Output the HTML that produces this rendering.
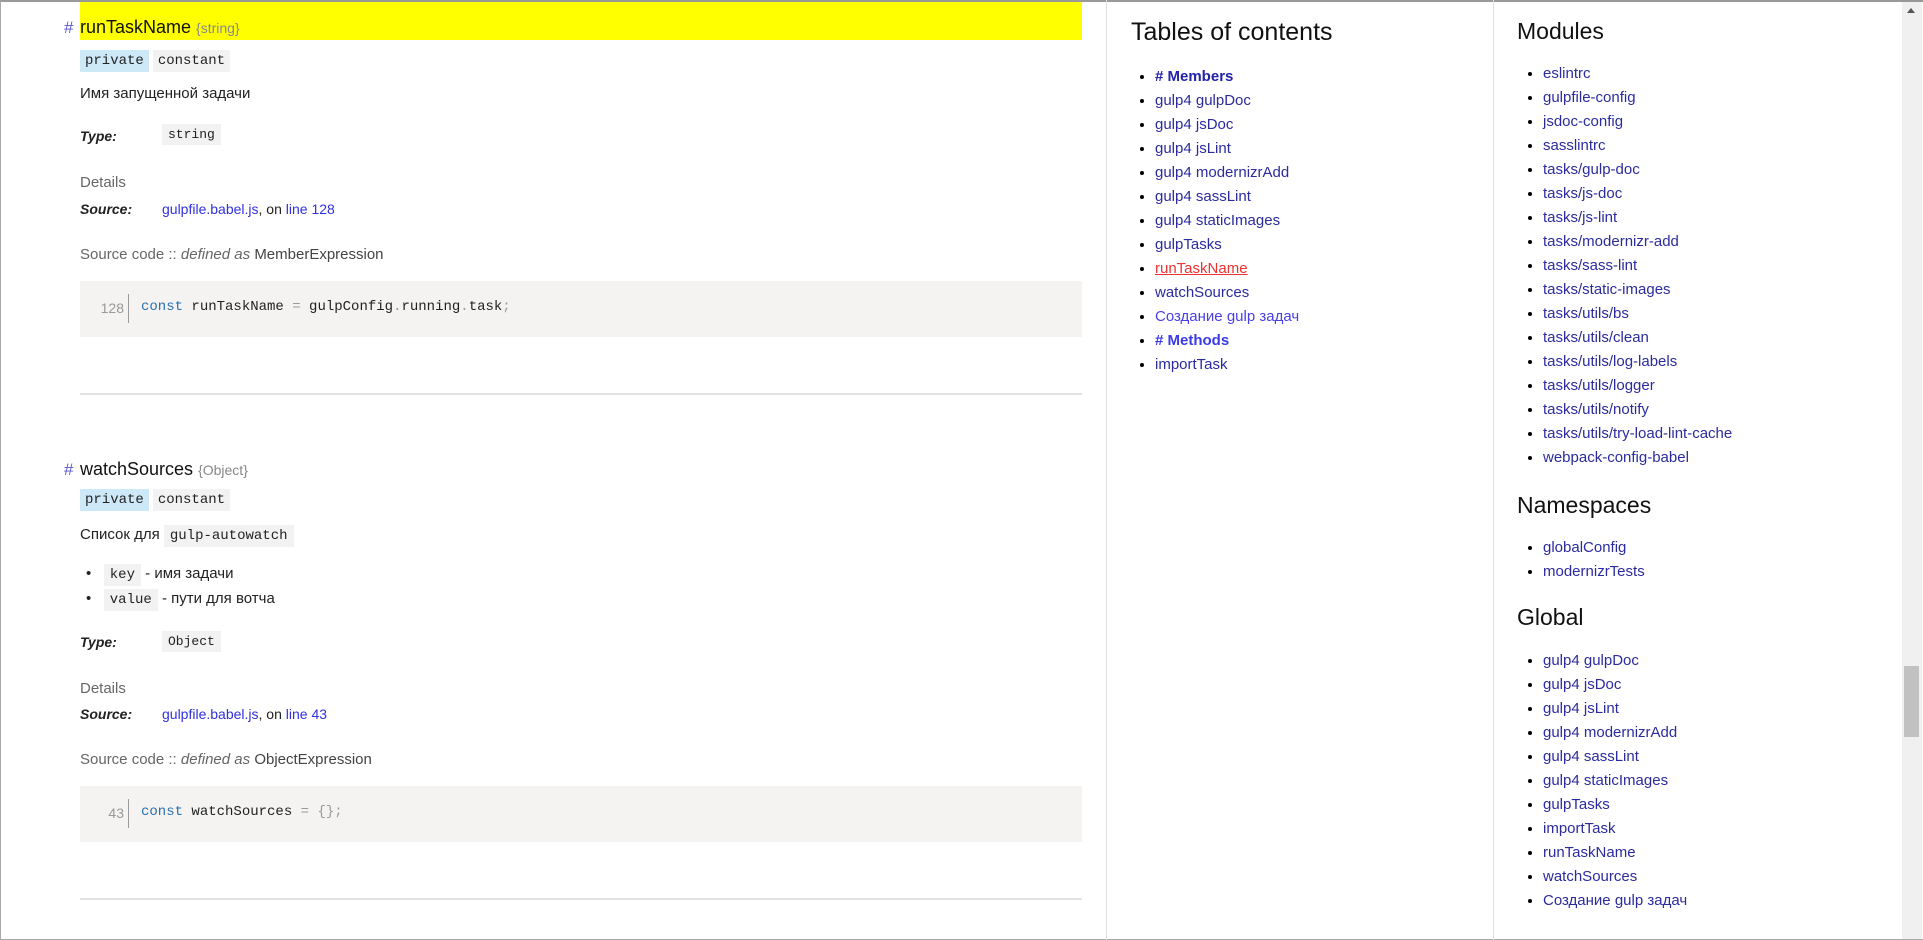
<!DOCTYPE html>
<html><head><meta charset="utf-8"><style>
*{margin:0;padding:0;box-sizing:border-box}
body{width:1923px;height:940px;overflow:hidden;background:#fff;font-family:"Liberation Sans","Noto Sans CJK SC",sans-serif;color:#222;position:relative}
.a{position:absolute;white-space:nowrap}
.frame{position:absolute;left:0;top:0;width:1923px;height:940px;border-top:2px solid #999;border-left:1px solid #aaa;border-bottom:1px solid #aaa}
.tag{display:inline-block;font-family:"Liberation Mono",monospace;font-size:14px;padding:3px 5px;background:#f2f2f2;margin-right:4px}
.tag.p{background:#cde8f7}
.c{font-family:"Liberation Mono",monospace;font-size:14px;background:#f2f2f2;padding:3px 6px}
.lbl{font-weight:bold;font-style:italic;font-size:14px}
.gray{color:#666}
a{color:#3030e0;text-decoration:none}
.code{position:absolute;left:80px;width:1002px;height:56px;background:#f4f3f2}
.code .n{position:absolute;left:12px;top:19px;width:32px;text-align:right;color:#999;font-size:14px}
.code .bar{position:absolute;left:48px;top:13px;width:1px;height:29px;background:#999}
.code .t{position:absolute;left:61px;top:18px;font-family:"Liberation Mono",monospace;font-size:14px;color:#222}
.hr{position:absolute;left:80px;width:1002px;height:2px;background:#e2e2e2}
ul{list-style:disc;position:absolute}
li{font-size:15px;height:24px;line-height:24px;color:#000}
li a{color:#2b2ba0}
h2{position:absolute;font-weight:normal;font-size:25px;color:#111}
</style></head><body>
<div class="frame"></div>
<div class="a" style="left:80px;top:2px;width:1002px;height:38px;background:#ffff00"></div>
<div class="a" style="left:64px;top:18px;font-size:17px;color:#5a5acc">#</div>
<div class="a" style="left:80px;top:17px;font-size:18px;color:#111">runTaskName <span style="font-size:14px;color:#888">{string}</span></div>
<div class="a" style="left:80px;top:50px"><span class="tag p">private</span><span class="tag">constant</span></div>
<div class="a" style="left:80px;top:85px;font-size:15px">Имя запущенной задачи</div>
<div class="a lbl" style="left:80px;top:128px">Type:</div>
<div class="a" style="left:162px;top:125px"><span class="c" style="font-size:13px">string</span></div>
<div class="a gray" style="left:80px;top:174px;font-size:15px">Details</div>
<div class="a lbl" style="left:80px;top:201px">Source:</div>
<div class="a" style="left:162px;top:201px;font-size:14px"><a>gulpfile.babel.js</a>, on <a>line 128</a></div>
<div class="a gray" style="left:80px;top:246px;font-size:15px">Source code :: <i>defined as</i> <span style="color:#444">MemberExpression</span></div>
<div class="code" style="top:281px"><span class="n">128</span><span class="bar"></span><span class="t"><span style="color:#2a6fb0">const</span> runTaskName <span style="color:#999">=</span> gulpConfig<span style="color:#999">.</span>running<span style="color:#999">.</span>task<span style="color:#999">;</span></span></div>
<div class="hr" style="top:393px"></div>

<div class="a" style="left:64px;top:460px;font-size:17px;color:#5a5acc">#</div>
<div class="a" style="left:80px;top:459px;font-size:18px;color:#111">watchSources <span style="font-size:14px;color:#888">{Object}</span></div>
<div class="a" style="left:80px;top:489px"><span class="tag p">private</span><span class="tag">constant</span></div>
<div class="a" style="left:80px;top:526px;font-size:15px">Список для <span class="c">gulp-autowatch</span></div>
<div class="a" style="left:86px;top:565px;font-size:15px">•&nbsp;&nbsp;&nbsp;<span class="c">key</span> - имя задачи</div>
<div class="a" style="left:86px;top:590px;font-size:15px">•&nbsp;&nbsp;&nbsp;<span class="c">value</span> - пути для вотча</div>
<div class="a lbl" style="left:80px;top:634px">Type:</div>
<div class="a" style="left:162px;top:632px"><span class="c" style="font-size:13px">Object</span></div>
<div class="a gray" style="left:80px;top:680px;font-size:15px">Details</div>
<div class="a lbl" style="left:80px;top:706px">Source:</div>
<div class="a" style="left:162px;top:706px;font-size:14px"><a>gulpfile.babel.js</a>, on <a>line 43</a></div>
<div class="a gray" style="left:80px;top:751px;font-size:15px">Source code :: <i>defined as</i> <span style="color:#444">ObjectExpression</span></div>
<div class="code" style="top:786px"><span class="n">43</span><span class="bar"></span><span class="t"><span style="color:#2a6fb0">const</span> watchSources <span style="color:#999">=</span> <span style="color:#999">{};</span></span></div>
<div class="hr" style="top:898px"></div>

<div class="a" style="left:1106px;top:0;width:1px;height:940px;background:#e0e0e0"></div>
<div class="a" style="left:1493px;top:0;width:1px;height:940px;background:#e0e0e0"></div>

<h2 style="left:1131px;top:18px">Tables of contents</h2>
<ul style="left:1155px;top:65px">
<li><a style="font-weight:bold;color:#2222aa">#&nbsp;Members</a></li>
<li><a>gulp4 gulpDoc</a></li><li><a>gulp4 jsDoc</a></li><li><a>gulp4 jsLint</a></li><li><a>gulp4 modernizrAdd</a></li><li><a>gulp4 sassLint</a></li><li><a>gulp4 staticImages</a></li><li><a>gulpTasks</a></li>
<li><a style="color:#ee3333;text-decoration:underline">runTaskName</a></li>
<li><a>watchSources</a></li><li><a style="color:#4a3ee6">Создание gulp задач</a></li>
<li><a style="font-weight:bold;color:#3a3ae8">#&nbsp;Methods</a></li>
<li><a>importTask</a></li>
</ul>

<h2 style="left:1517px;top:18px;font-size:23px">Modules</h2>
<ul style="left:1543px;top:62px">
<li><a>eslintrc</a></li><li><a>gulpfile-config</a></li><li><a>jsdoc-config</a></li><li><a>sasslintrc</a></li><li><a>tasks/gulp-doc</a></li><li><a>tasks/js-doc</a></li><li><a>tasks/js-lint</a></li><li><a>tasks/modernizr-add</a></li><li><a>tasks/sass-lint</a></li><li><a>tasks/static-images</a></li><li><a>tasks/utils/bs</a></li><li><a>tasks/utils/clean</a></li><li><a>tasks/utils/log-labels</a></li><li><a>tasks/utils/logger</a></li><li><a>tasks/utils/notify</a></li><li><a>tasks/utils/try-load-lint-cache</a></li><li><a>webpack-config-babel</a></li>
</ul>
<h2 style="left:1517px;top:492px;font-size:23px">Namespaces</h2>
<ul style="left:1543px;top:536px"><li><a>globalConfig</a></li><li><a>modernizrTests</a></li></ul>
<h2 style="left:1517px;top:604px;font-size:23px">Global</h2>
<ul style="left:1543px;top:649px">
<li><a>gulp4 gulpDoc</a></li><li><a>gulp4 jsDoc</a></li><li><a>gulp4 jsLint</a></li><li><a>gulp4 modernizrAdd</a></li><li><a>gulp4 sassLint</a></li><li><a>gulp4 staticImages</a></li><li><a>gulpTasks</a></li><li><a>importTask</a></li><li><a>runTaskName</a></li><li><a>watchSources</a></li><li><a>Создание gulp задач</a></li>
</ul>

<div class="a" style="left:1902px;top:2px;width:20px;height:937px;background:#f0f0f0"></div>
<div class="a" style="left:1907px;top:8px;width:0;height:0;border-left:4px solid transparent;border-right:4px solid transparent;border-bottom:5px solid #555"></div>
<div class="a" style="left:1904px;top:666px;width:15px;height:71px;background:#c1c1c1"></div>
</body></html>
